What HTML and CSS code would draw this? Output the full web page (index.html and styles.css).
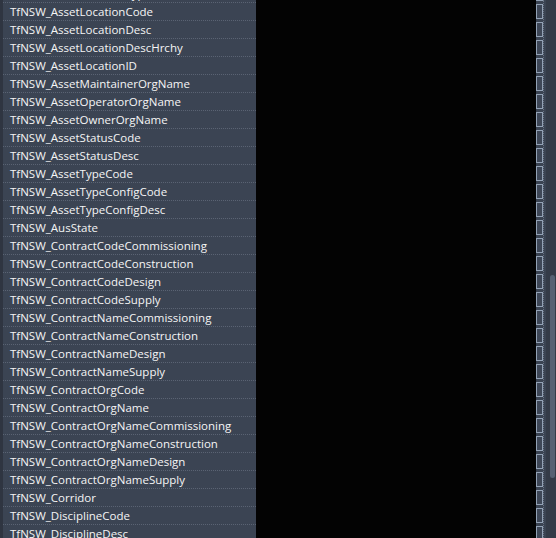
FILE: index.html
```html
<!DOCTYPE html>
<html>
<head>
<meta charset="utf-8">
<link rel="stylesheet" href="styles.css">
</head>
<body>
<div class="app">
  <div class="panel">
    <ul class="list">
      <li>TfNSW_AssetLocationType</li>
      <li>TfNSW_AssetLocationCode</li>
      <li>TfNSW_AssetLocationDesc</li>
      <li>TfNSW_AssetLocationDescHrchy</li>
      <li>TfNSW_AssetLocationID</li>
      <li>TfNSW_AssetMaintainerOrgName</li>
      <li>TfNSW_AssetOperatorOrgName</li>
      <li>TfNSW_AssetOwnerOrgName</li>
      <li>TfNSW_AssetStatusCode</li>
      <li>TfNSW_AssetStatusDesc</li>
      <li>TfNSW_AssetTypeCode</li>
      <li>TfNSW_AssetTypeConfigCode</li>
      <li>TfNSW_AssetTypeConfigDesc</li>
      <li>TfNSW_AusState</li>
      <li>TfNSW_ContractCodeCommissioning</li>
      <li>TfNSW_ContractCodeConstruction</li>
      <li>TfNSW_ContractCodeDesign</li>
      <li>TfNSW_ContractCodeSupply</li>
      <li>TfNSW_ContractNameCommissioning</li>
      <li>TfNSW_ContractNameConstruction</li>
      <li>TfNSW_ContractNameDesign</li>
      <li>TfNSW_ContractNameSupply</li>
      <li>TfNSW_ContractOrgCode</li>
      <li>TfNSW_ContractOrgName</li>
      <li>TfNSW_ContractOrgNameCommissioning</li>
      <li>TfNSW_ContractOrgNameConstruction</li>
      <li>TfNSW_ContractOrgNameDesign</li>
      <li>TfNSW_ContractOrgNameSupply</li>
      <li>TfNSW_Corridor</li>
      <li>TfNSW_DisciplineCode</li>
      <li>TfNSW_DisciplineDesc</li>
    </ul>
  </div>
  <div class="canvas"></div>
  <div class="side">
    <div class="cells">
      <span></span><span></span><span></span><span></span><span></span><span></span><span></span><span></span>
      <span></span><span></span><span></span><span></span><span></span><span></span><span></span><span></span>
      <span></span><span></span><span></span><span></span><span></span><span></span><span></span><span></span>
      <span></span><span></span><span></span><span></span><span></span><span></span><span></span>
    </div>
    <div class="divider"></div>
    <div class="track"><div class="thumb"></div></div>
  </div>
</div>
</body>
</html>
```
FILE: styles.css
```css
html, body {
  margin: 0;
  padding: 0;
  background: #000;
  height: 100%;
  overflow: hidden;
}
.app {
  display: flex;
  height: 538px;
  overflow: hidden;
}
.panel {
  width: 253px;
  flex: none;
  background: #3b4453;
  border-left: 3px solid #2f3541;
  overflow: hidden;
}
.list {
  list-style: none;
  margin: -15px 0 0 0;
  padding: 0;
}
.list li {
  height: 17px;
  border-bottom: 1px dotted #5a6373;
  padding-left: 7px;
  font-family: "Open Sans", "Noto Sans", sans-serif;
  font-size: 11.5px;
  line-height: 17px;
  color: #f5f5f5;
  white-space: nowrap;
}
.canvas {
  flex: 1;
  background: #030303;
}
.side {
  width: 20px;
  flex: none;
  display: flex;
}
.cells {
  width: 7px;
  display: flex;
  flex-direction: column;
  gap: 3px;
  margin-top: -14px;
  background: #3b4453;
}
.cells span {
  flex: none;
  height: 13px;
  border: 1px solid #93a2b6;
  background: #3e4757;
}
.divider {
  width: 2px;
  background: #3b4453;
  border-left: 1px dotted #6a7485;
}
.track {
  flex: 1;
  background: #343b48;
  position: relative;
}
.thumb {
  position: absolute;
  left: 4px;
  width: 5px;
  top: 275px;
  height: 203px;
  border-radius: 3px;
  background: #566173;
}
```
